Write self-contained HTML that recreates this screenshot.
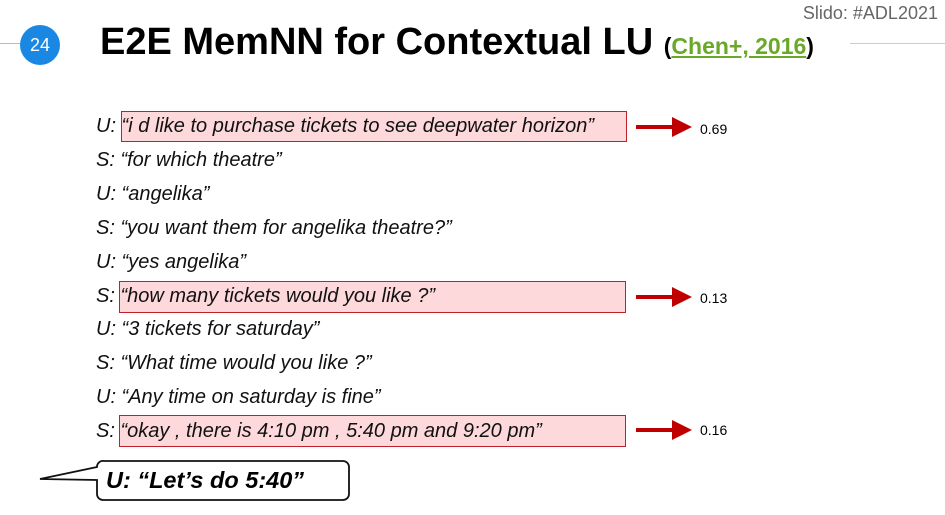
<!DOCTYPE html>
<html><head><meta charset="utf-8"><style>
body{margin:0;width:945px;height:515px;background:#fff;position:relative;overflow:hidden;font-family:"Liberation Sans",Arial,sans-serif}
.a{position:absolute}
.line{font-style:italic;font-size:20px;color:#111;left:96px;white-space:nowrap}
.box{position:absolute;background:#fdd9dc;border:1.5px solid #c0202a;box-sizing:border-box}
.num{position:absolute;left:700px;font-size:14px;color:#000;font-family:"Liberation Sans",sans-serif}
</style></head><body>
<div class="a" style="left:0;top:43px;width:22px;height:1px;background:#bbb"></div>
<div class="a" style="left:850px;top:43px;width:95px;height:1px;background:#ccc"></div>
<div class="a" style="right:7px;top:3px;font-size:18px;color:#666">Slido: #ADL2021</div>
<div class="a" style="left:20px;top:25px;width:40px;height:40px;border-radius:50%;background:#1a88e3;color:#fff;font-size:18px;text-align:center;line-height:40px">24</div>
<div class="a" style="left:100px;top:21px;font-size:38px;font-weight:bold;color:#000;white-space:nowrap">E2E MemNN for Contextual LU <span style="font-size:23px">(<span style="color:#6aa829;text-decoration:underline">Chen+, 2016</span>)</span></div>

<div class="box" style="left:121px;top:111px;width:506px;height:31px"></div>
<div class="box" style="left:119px;top:281px;width:507px;height:32px"></div>
<div class="box" style="left:119px;top:415px;width:507px;height:32px"></div>

<svg class="a" style="left:0;top:0" width="945" height="515">
<g fill="#c00000" stroke="none">
<rect x="636" y="125" width="40" height="4"/><polygon points="672,117 692,127 672,137"/>
<rect x="636" y="295" width="40" height="4"/><polygon points="672,287 692,297 672,307"/>
<rect x="636" y="428" width="40" height="4"/><polygon points="672,420 692,430 672,440"/>
</g>
<path d="M104,461 H343 a6,6 0 0 1 6,6 V494 a6,6 0 0 1 -6,6 H103 a6,6 0 0 1 -6,-6 V480 L40,479 L97,467 a6,6 0 0 1 7,-6 Z" fill="#fff" stroke="#111" stroke-width="1.8"/>
</svg>

<div class="a line" style="top:115px">U: “i d like to purchase tickets to see deepwater horizon”</div>
<div class="a line" style="top:149px">S: “for which theatre”</div>
<div class="a line" style="top:183px">U: “angelika”</div>
<div class="a line" style="top:217px">S: “you want them for angelika theatre?”</div>
<div class="a line" style="top:251px">U: “yes angelika”</div>
<div class="a line" style="top:285px">S: “how many tickets would you like ?”</div>
<div class="a line" style="top:318px">U: “3 tickets for saturday”</div>
<div class="a line" style="top:352px">S: “What time would you like ?”</div>
<div class="a line" style="top:386px">U: “Any time on saturday is fine”</div>
<div class="a line" style="top:420px">S: “okay , there is 4:10 pm , 5:40 pm and 9:20 pm”</div>
<div class="num" style="top:121px">0.69</div>
<div class="num" style="top:290px">0.13</div>
<div class="num" style="top:422px">0.16</div>
<div class="a" style="left:106px;top:467px;font-size:23.5px;font-weight:bold;font-style:italic;color:#000">U: “Let’s do 5:40”</div>
</body></html>
